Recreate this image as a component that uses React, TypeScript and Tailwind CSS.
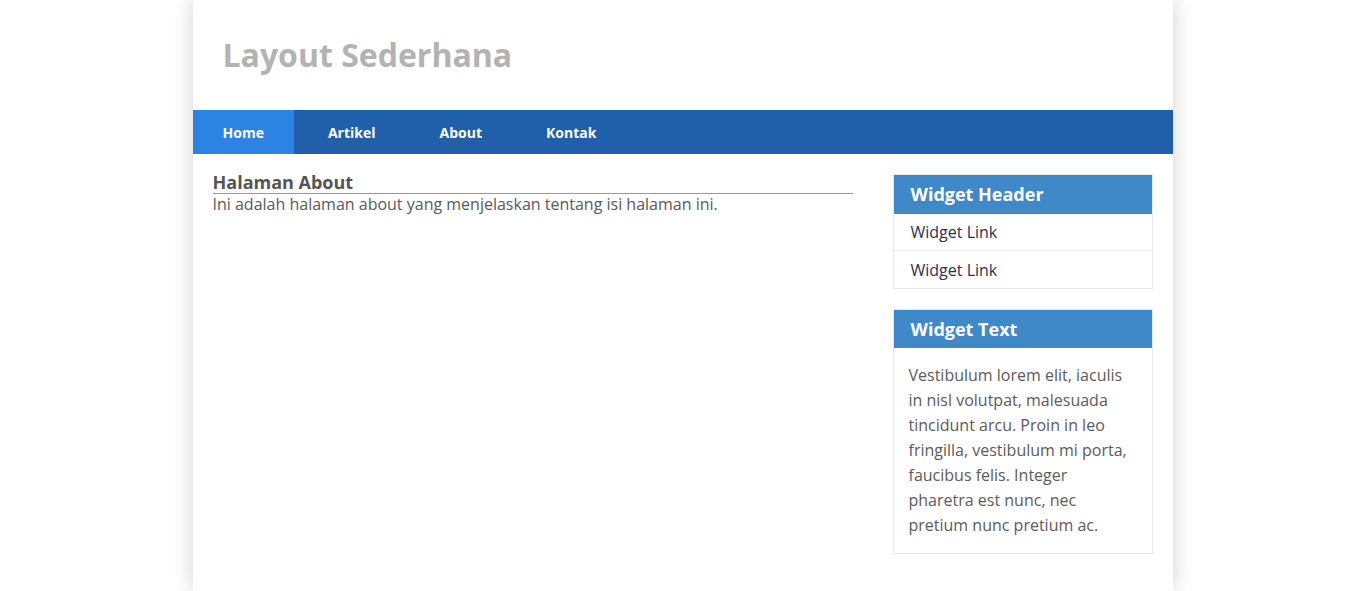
const menu = ["Home", "Artikel", "About", "Kontak"];

export default function App() {
	return (
		<div className="min-h-[591px] bg-white font-['Open_Sans',sans-serif]">
			<div className="mx-auto min-h-[591px] w-[980px] bg-white shadow-[0_0_20px_rgba(0,0,0,0.18)]">
				{/* header */}
				<header className="flex h-[110px] items-center px-[30px]">
					<h1 className="text-[32px] font-bold text-[#b3b3b3]">Layout Sederhana</h1>
				</header>

				{/* nav */}
				<nav className="flex h-[44px] gap-[4px] bg-[#205faa]">
					{menu.map((item, i) => (
						<a
							key={item}
							href="#"
							className={
								i === 0
									? "flex items-center bg-[#2b84e4] px-[30px] text-[14px] font-bold text-white"
									: "flex items-center px-[30px] text-[14px] font-bold text-white"
							}
						>
							{item}
						</a>
					))}
				</nav>

				<div className="flex gap-[40px] px-[20px]">
					{/* main */}
					<main className="w-[640px] pt-[18px]">
						<h2 className="border-b border-[#999] text-[18px] leading-[21px] font-bold text-[#555]">
							Halaman About
						</h2>
						<p className="text-[16px] leading-[20px] text-[#5a5a5a]">
							Ini adalah halaman about yang menjelaskan tentang isi halaman ini.
						</p>
					</main>

					{/* sidebar */}
					<aside className="flex w-[260px] flex-col gap-[20px] pt-[20px] pb-[20px]">
						<div className="border border-[#e8e8e8]">
							<h3 className="bg-[#3f89c9] px-[17px] py-[7px] text-[18px] leading-[25px] font-bold text-white">
								Widget Header
							</h3>
							<a href="#" className="flex h-[37px] items-center border-b border-[#eee] px-[17px] text-[16px] text-[#30304e]">
								Widget Link
							</a>
							<a href="#" className="flex h-[37px] items-center px-[17px] text-[16px] text-[#30304e]">
								Widget Link
							</a>
						</div>

						<div className="border border-[#e8e8e8]">
							<h3 className="bg-[#3f89c9] px-[17px] py-[7px] text-[18px] leading-[24px] font-bold text-white">
								Widget Text
							</h3>
							<p className="p-[15px] text-[16px] leading-[25px] text-[#5e5a5a]">
								Vestibulum lorem elit, iaculis in nisl volutpat, malesuada tincidunt arcu. Proin in leo fringilla, vestibulum mi porta, faucibus felis. Integer pharetra est nunc, nec pretium nunc pretium ac.
							</p>
						</div>
					</aside>
				</div>
			</div>
		</div>
	);
}
